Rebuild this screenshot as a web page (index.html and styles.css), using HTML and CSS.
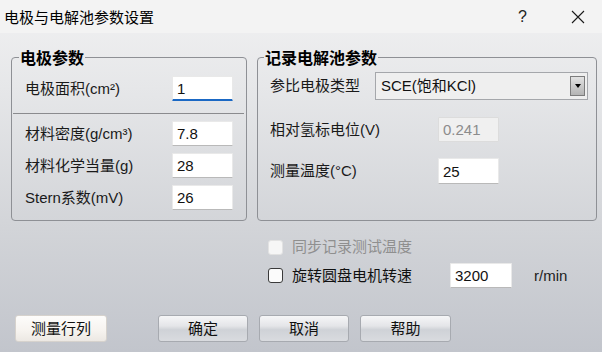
FILE: index.html
```html
<!DOCTYPE html>
<html lang="zh-CN">
<head>
<meta charset="utf-8">
<title>电极与电解池参数设置</title>
<link rel="stylesheet" href="styles.css">
</head>
<body>
<div class="window">
  <div class="titlebar">
    <div class="title">电极与电解池参数设置</div>
    <div class="help">?</div>
    <div class="close">
      <svg width="14" height="14" viewBox="0 0 14 14"><path d="M1 1 L13 13 M13 1 L1 13" stroke="#1a1a1a" stroke-width="1.1" fill="none"/></svg>
    </div>
  </div>
  <div class="content">
    <div class="groups">
      <fieldset class="group group-left">
        <legend>电极参数</legend>
        <div class="row row-first">
          <span class="label lbl-left">电极面积(cm²)</span>
          <input class="field focused" type="text" value="1">
        </div>
        <div class="sep"></div>
        <div class="row row-next">
          <span class="label lbl-left">材料密度(g/cm³)</span>
          <input class="field" type="text" value="7.8">
        </div>
        <div class="row row-next">
          <span class="label lbl-left">材料化学当量(g)</span>
          <input class="field" type="text" value="28">
        </div>
        <div class="row row-next">
          <span class="label lbl-left">Stern系数(mV)</span>
          <input class="field" type="text" value="26">
        </div>
      </fieldset>
      <fieldset class="group group-right">
        <legend>记录电解池参数</legend>
        <div class="row row-sel">
          <span class="label lbl-sel">参比电极类型</span>
          <div class="select">
            <span class="select-text">SCE(饱和KCl)</span>
            <span class="select-btn"><span class="tri"></span></span>
          </div>
        </div>
        <div class="row row-pot">
          <span class="label lbl-right">相对氢标电位(V)</span>
          <input class="field disabled" type="text" value="0.241" disabled>
        </div>
        <div class="row row-temp">
          <span class="label lbl-right">测量温度(°C)</span>
          <input class="field tall" type="text" value="25">
        </div>
      </fieldset>
    </div>
    <div class="check-row check-a">
      <span class="box box-disabled"></span>
      <span class="check-label muted">同步记录测试温度</span>
    </div>
    <div class="check-row check-b">
      <span class="box"></span>
      <span class="check-label wide">旋转圆盘电机转速</span>
      <input class="field speed" type="text" value="3200">
      <span class="unit">r/min</span>
    </div>
    <div class="buttons">
      <div class="btn btn-light">测量行列</div>
      <div class="btn btn-ok">确定</div>
      <div class="btn">取消</div>
      <div class="btn btn-help">帮助</div>
    </div>
  </div>
</div>
</body>
</html>
```
FILE: styles.css
```css
* { box-sizing: border-box; }
html, body { margin: 0; padding: 0; }
body {
  width: 602px;
  height: 352px;
  overflow: hidden;
  font-family: "Liberation Sans", "Noto Sans CJK SC", sans-serif;
  font-size: 15px;
  color: #1a1a1a;
}
.window {
  width: 602px;
  height: 352px;
  display: flex;
  flex-direction: column;
  background: linear-gradient(to bottom, #f1f1f2 0%, #e6e7e9 25%, #d2d4d8 65%, #c2c5cc 100%);
}
.titlebar {
  height: 33px;
  flex: none;
  display: flex;
  align-items: center;
  background: #f3f3f3;
  padding-left: 4px;
}
.title {
  flex: 1;
  font-family: "Noto Sans CJK SC", sans-serif;
  font-size: 15px;
  line-height: 18px;
  color: #000;
}
.help {
  width: 14px;
  font-family: "Liberation Sans", sans-serif;
  font-size: 16px;
  line-height: 18px;
  color: #222;
  margin-right: 39px;
}
.close {
  width: 14px;
  height: 14px;
  margin-right: 17px;
  display: flex;
}
.content {
  flex: 1;
  padding: 16px 5px 0 11px;
}
.groups {
  display: flex;
  gap: 10px;
  align-items: stretch;
}
.group {
  margin: 0;
  border: 1px solid #8e9095;
  border-radius: 4px;
  padding: 0 13px 10px 13px;
  min-width: 0;
}
.group-left { width: 236px; }
.group-right { width: 340px; padding: 0 8px 10px 12px; }
.group legend {
  font-family: "Noto Sans CJK SC", sans-serif;
  font-weight: bold;
  font-size: 16px;
  line-height: 16px;
  padding: 0 1px;
  margin-left: -6px;
  color: #000;
}
.row {
  display: flex;
  align-items: center;
  height: 25px;
}
.row-first { margin-top: 11px; }
.row-next { margin-top: 7px; }
.sep {
  height: 1px;
  background: #8a8b8e;
  margin: 12px -11px 0 -12px;
}
.label {
  flex: none;
  line-height: 18px;
  white-space: nowrap;
}
.lbl-left { width: 147px; }
.lbl-sel { width: 105px; }
.lbl-right { width: 168px; }
.field {
  width: 61px;
  height: 25px;
  margin: 0;
  padding: 0 0 0 4px;
  background: #fff;
  border: 1px solid #e9e9e9;
  border-bottom-color: #b9b9b9;
  border-radius: 1px;
  font-family: "Liberation Sans", sans-serif;
  font-size: 15px;
  color: #111;
  outline: none;
}
.field.focused {
  border-bottom: 2px solid #1a68c4;
}
.field.disabled {
  background: #f0f0f0;
  border: 1px solid #dcdcdc;
  color: #8c8c8c;
  -webkit-text-fill-color: #8c8c8c;
}
.field.tall { height: 26px; }
.row-sel { margin-top: 7px; height: 28px; }
.row-pot { margin-top: 17px; }
.row-temp { margin-top: 16px; height: 26px; }
.select {
  width: 213px;
  height: 28px;
  display: flex;
  align-items: center;
  background: #efefef;
  border: 1px solid #a5a7ab;
  padding: 0 2px 0 5px;
}
.select-text {
  flex: 1;
  color: #111;
  line-height: 18px;
}
.select-btn {
  width: 15px;
  height: 20px;
  border: 1px solid #7c7c7c;
  background: linear-gradient(to bottom, #e2e2e2, #b4b4b4);
  display: flex;
  align-items: center;
  justify-content: center;
}
.tri {
  width: 0;
  height: 0;
  border-left: 3px solid transparent;
  border-right: 3px solid transparent;
  border-top: 4px solid #000;
}
.check-row {
  display: flex;
  align-items: center;
  margin-left: 257px;
}
.check-a { margin-top: 16px; height: 20px; }
.check-b { margin-top: 6px; height: 25px; }
.box {
  width: 15px;
  height: 15px;
  flex: none;
  border: 1px solid #3a3a3a;
  border-radius: 3px;
  background: #fbfbfb;
  margin-right: 9px;
}
.box-disabled {
  border-color: #e2e2e2;
  background: #f6f6f6;
}
.check-label { line-height: 18px; white-space: nowrap; color: #111; }
.check-label.muted { color: #8f8f8f; }
.check-label.wide { width: 158px; }
.field.speed { width: 62px; }
.unit { margin-left: 22px; color: #222; line-height: 18px; }
.buttons {
  display: flex;
  margin-top: 27px;
  margin-left: 4px;
}
.btn {
  width: 90px;
  height: 27px;
  display: flex;
  align-items: center;
  justify-content: center;
  border: 1px solid #a7aab0;
  border-radius: 3px;
  background: linear-gradient(to bottom, #f6f6f7 0%, #e4e5e8 40%, #cfd2d7 55%, #d9dbdf 100%);
  margin-left: 11px;
  color: #111;
  line-height: 18px;
}
.btn-light {
  width: 92px;
  margin-left: 0;
  border-color: #d6d2cd;
  background: linear-gradient(to bottom, #fdfcfb 0%, #f6f3ef 60%, #ece8e3 100%);
}
.btn-ok { margin-left: 51px; }
.btn-help { width: 91px; }
```
